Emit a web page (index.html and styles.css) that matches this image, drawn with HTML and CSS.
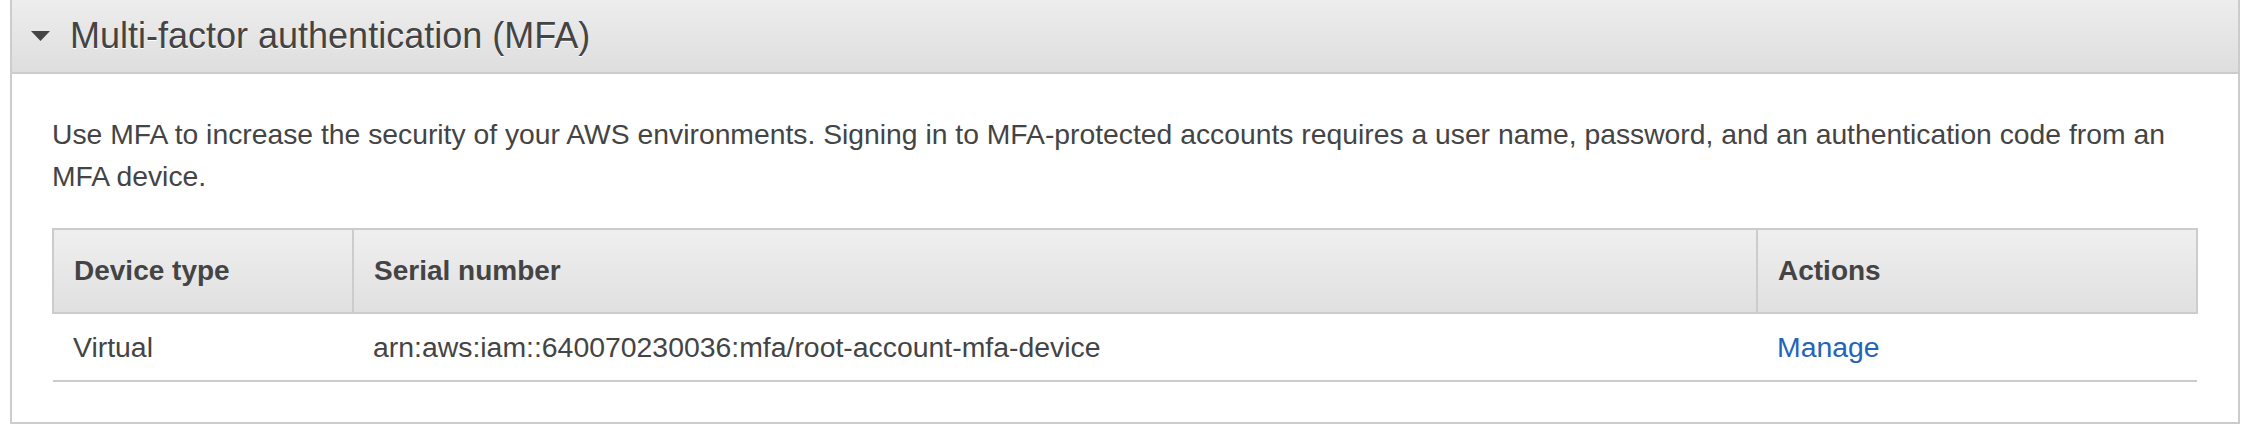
FILE: index.html
```html
<!DOCTYPE html>
<html lang="en">
<head>
<meta charset="utf-8">
<title>Multi-factor authentication (MFA)</title>
<link rel="stylesheet" href="styles.css">
</head>
<body>
<section class="panel">
  <header class="panel-header">
    <svg class="caret" width="19" height="10" viewBox="0 0 19 10" aria-hidden="true"><path d="M0 0 H19 L9.5 10 Z" fill="#444"/></svg>
    <h2 class="panel-title">Multi-factor authentication (MFA)</h2>
  </header>
  <div class="panel-body">
    <p class="intro">Use MFA to increase the security of your AWS environments. Signing in to MFA-protected accounts requires a user name, password, and an authentication code from an MFA device.</p>
    <table class="mfa-table">
      <colgroup>
        <col class="col-type">
        <col class="col-serial">
        <col class="col-actions">
      </colgroup>
      <thead>
        <tr>
          <th>Device type</th>
          <th>Serial number</th>
          <th>Actions</th>
        </tr>
      </thead>
      <tbody>
        <tr>
          <td>Virtual</td>
          <td>arn:aws:iam::640070230036:mfa/root-account-mfa-device</td>
          <td><a class="link" href="#">Manage</a></td>
        </tr>
      </tbody>
    </table>
  </div>
</section>
</body>
</html>
```
FILE: styles.css
```css
html, body {
  margin: 0;
  padding: 0;
  background: #ffffff;
}

body {
  font-family: "Liberation Sans", Arial, Helvetica, sans-serif;
  color: #444444;
  overflow: hidden;
}

.panel {
  margin: -2px 6px 0 10px;
  border: 2px solid #cccccc;
  background: #ffffff;
}

.panel-header {
  display: flex;
  align-items: center;
  gap: 20px;
  padding: 15px 0 15px 19px;
  background: linear-gradient(to bottom, #ededed, #dedede);
  border-bottom: 2px solid #cccccc;
}

.caret {
  display: block;
  flex: none;
}

.panel-title {
  margin: 0;
  font-size: 36px;
  font-weight: normal;
  line-height: 42px;
  color: #444444;
  text-shadow: 0 1px 0 #ffffff;
}

.panel-body {
  padding: 39px 40px 40px 40px;
}

.intro {
  margin: 0 0 31px 0;
  font-size: 28.3px;
  line-height: 42px;
}

.mfa-table {
  width: 100%;
  border-collapse: collapse;
  table-layout: fixed;
  font-size: 28px;
  line-height: 42px;
}

.col-type { width: 300px; }
.col-serial { width: 1404px; }

.mfa-table th {
  text-align: left;
  font-weight: bold;
  color: #444444;
  padding: 20px 20px;
  background: linear-gradient(to bottom, #efefef, #e0e0e0);
  border: 2px solid #cccccc;
}

.mfa-table td {
  padding: 12px 20px;
  font-size: 28.4px;
  border-bottom: 2px solid #cccccc;
  white-space: nowrap;
}

.link {
  color: #2265b8;
  text-decoration: none;
}
```
